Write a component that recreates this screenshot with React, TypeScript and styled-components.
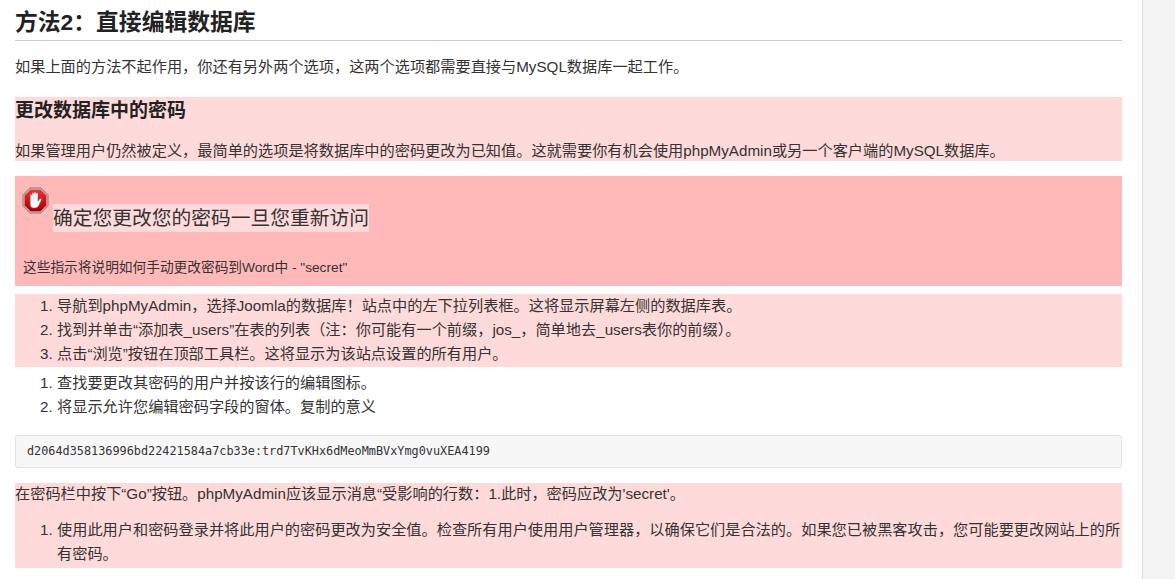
import React from "react";
import styled, { createGlobalStyle } from "styled-components";

const Global = createGlobalStyle`
  html, body { margin: 0; padding: 0; background: #fff; height: 100%; overflow: hidden; }
  body { font-family: "Liberation Sans", "Noto Sans CJK SC", sans-serif; font-size: 15.2px; line-height: 24px; color: #333; }
`;

const Page = styled.div`
  display: flex;
  height: 579px;
  overflow: hidden;
`;
const Content = styled.main`
  width: 1107px;
  margin-left: 15px;
  flex: none;
`;
const Sidebar = styled.aside`
  width: 33px;
  height: 579px;
  margin-left: 20px;
  flex: none;
  background: #f3f3f3;
  border-left: 1px solid #ddd;
  box-sizing: border-box;
`;
const Title = styled.h2`
  margin: 0;
  height: 40px;
  font-size: 22.8px;
  line-height: 44px;
  font-weight: 700;
  color: #222;
  border-bottom: 1px solid #ccc;
`;
const Para = styled.p`
  margin: 14px 0 18px;
  height: 24px;
`;
const Pink = styled.section`
  background: #ffdada;
`;
const SubTitle = styled.h3`
  margin: 0;
  height: 28px;
  font-size: 19px;
  line-height: 28px;
  font-weight: 700;
  color: #222;
`;
const PinkPara = styled.p`
  margin: 0;
  padding-top: 14px;
  height: 22px;
  line-height: 24px;
  white-space: nowrap;
`;
const Alert = styled.section`
  margin: 15px 0 8px;
  height: 110px;
  background: #ffb9b9;
  box-sizing: border-box;
  padding: 11px 8px 0 7px;
`;
const AlertHead = styled.div`
  display: flex;
  align-items: flex-start;
  height: 45px;
`;
const AlertTitle = styled.span`
  margin: 17px 0 0 4px;
  background: #ffdada;
  font-size: 19.75px;
  line-height: 28px;
  height: 28px;
  font-weight: 400;
`;
const AlertNote = styled.p`
  margin: 24px 0 0 1px;
  font-size: 13.7px;
  line-height: 24px;
`;
const List = styled.ol`
  margin: 0;
  padding: 0 0 0 42px;
  list-style: decimal;
`;
const PinkList = styled(List)`
  background: #ffdada;
  height: 73px;
`;
const PlainList = styled(List)`
  margin-top: 4px;
`;
const Code = styled.pre`
  margin: 16px 0 15px;
  height: 33px;
  box-sizing: border-box;
  padding: 0 11px;
  background: #f7f7f7;
  border: 1px solid #e1e1e8;
  border-radius: 3px;
  font-family: "DejaVu Sans Mono", monospace;
  font-size: 11.83px;
  line-height: 31px;
`;
const LastBlock = styled.section`
  background: #ffdada;
  height: 85px;
`;
const LastPara = styled.p`
  margin: 0 0 11px;
  height: 24px;
  line-height: 22px;
  white-space: nowrap;
`;
const IconSvg = styled.svg`
  flex: none;
`;

const StopIcon = () => (
  <IconSvg width="27" height="27" viewBox="0 0 27 27">
    <defs>
      <linearGradient id="red" x1="0" y1="0" x2="0" y2="1">
        <stop offset="0" stopColor="#e8383c" />
        <stop offset="0.6" stopColor="#d40a0a" />
        <stop offset="1" stopColor="#9c0000" />
      </linearGradient>
    </defs>
    <polygon points="8,0.8 19,0.8 26.200,8 26.200,19 19,26.200 8,26.200 0.800,19 0.800,8" fill="#a8a0a0" stroke="#8f8585" strokeWidth="0.8" strokeLinejoin="round" />
    <polygon points="8.6,2.2 18.4,2.2 24.800,8.600 24.800,18.400 18.400,24.800 8.600,24.800 2.200,18.400 2.200,8.600" fill="url(#red)" stroke="#f0b0b0" strokeWidth="0.8" />
    <path
      d="M8.200 13V8.500c0-1.300 1.800-1.300 1.800 0V6.700c0-1.300 2-1.300 2 0V6c0-1.300 2-1.300 2 0v.8c0-1.300 2-1.300 2 0v7.400l1.500-2.200c.8-1.200 2.500-.3 1.900 1l-2.600 5.500c-.8 1.600-2 2.500-3.700 2.500h-1.600c-2.200 0-3.300-1.500-3.300-3.500z"
      fill="#fff"
      stroke="#6d6d6d"
      strokeWidth="0.6"
    />
    <path d="M10 8.500v4.500M12 6.700v6M14 6.700v6" fill="none" stroke="#b8b8b8" strokeWidth="0.5" />
  </IconSvg>
);

export default function App() {
  return (
    <Page>
      <Global />
      <Content>
        <Title>方法2：直接编辑数据库</Title>
        <Para>如果上面的方法不起作用，你还有另外两个选项，这两个选项都需要直接与MySQL数据库一起工作。</Para>
        <Pink>
          <SubTitle>更改数据库中的密码</SubTitle>
          <PinkPara>如果管理用户仍然被定义，最简单的选项是将数据库中的密码更改为已知值。这就需要你有机会使用phpMyAdmin或另一个客户端的MySQL数据库。</PinkPara>
        </Pink>
        <Alert>
          <AlertHead>
            <StopIcon />
            <AlertTitle>确定您更改您的密码一旦您重新访问</AlertTitle>
          </AlertHead>
          <AlertNote>这些指示将说明如何手动更改密码到Word中 - "secret"</AlertNote>
        </Alert>
        <PinkList>
          <li>导航到phpMyAdmin，选择Joomla的数据库！站点中的左下拉列表框。这将显示屏幕左侧的数据库表。</li>
          <li>找到并单击“添加表_users”在表的列表（注：你可能有一个前缀，jos_，简单地去_users表你的前缀）。</li>
          <li>点击“浏览”按钮在顶部工具栏。这将显示为该站点设置的所有用户。</li>
        </PinkList>
        <PlainList>
          <li>查找要更改其密码的用户并按该行的编辑图标。</li>
          <li>将显示允许您编辑密码字段的窗体。复制的意义</li>
        </PlainList>
        <Code>d2064d358136996bd22421584a7cb33e:trd7TvKHx6dMeoMmBVxYmg0vuXEA4199</Code>
        <LastBlock>
          <LastPara>在密码栏中按下“Go”按钮。phpMyAdmin应该显示消息“受影响的行数：1.此时，密码应改为'secret'。</LastPara>
          <List>
            <li>使用此用户和密码登录并将此用户的密码更改为安全值。检查所有用户使用用户管理器，以确保它们是合法的。如果您已被黑客攻击，您可能要更改网站上的所有密码。</li>
          </List>
        </LastBlock>
      </Content>
      <Sidebar />
    </Page>
  );
}
